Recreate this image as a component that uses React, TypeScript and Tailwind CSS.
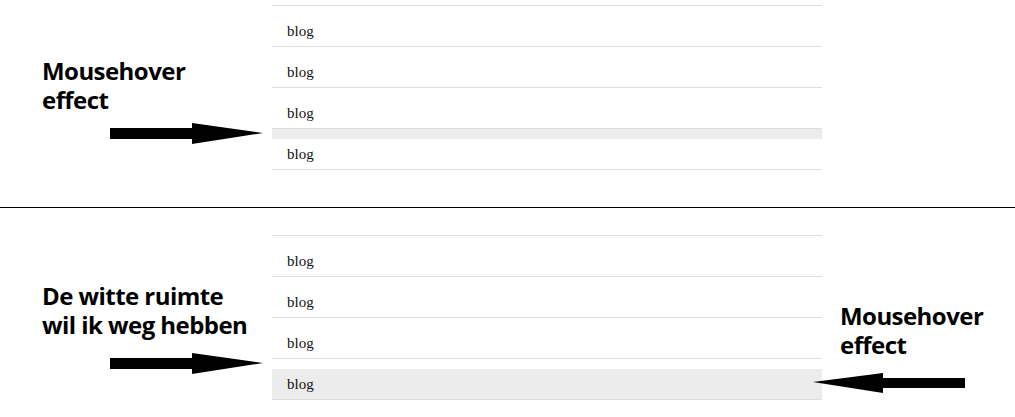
const label = "font-['Open_Sans',sans-serif] font-bold text-[24px] leading-[29px] tracking-[-0.55px] text-black";

function ArrowRight() {
  return (
    <svg width="153" height="21" viewBox="0 0 153 21" className="block">
      <rect x="0" y="5" width="84" height="11" fill="#000" />
      <polygon points="82,0 153,10 82,21" fill="#000" />
    </svg>
  );
}

function ArrowLeft() {
  return (
    <svg width="152" height="20" viewBox="0 0 152 20" className="block">
      <polygon points="0,9 70,0 70,20" fill="#000" />
      <rect x="68" y="5" width="84" height="10" fill="#000" />
    </svg>
  );
}

// hover: which part of the 4th row is grey
function BlogList({ hover }: { hover: "gap" | "item" }) {
  return (
    <ul className="border-t border-[#dedede]">
      {[0, 1, 2, 3].map((i) => {
        const last = i === 3;
        return (
          <li key={i} className="border-b border-[#dedede]">
            <div className={`h-[10px] ${last && hover === "gap" ? "bg-[#ececec]" : ""}`} />
            <div
              className={`h-[30px] flex items-center pl-[15px] font-['Liberation_Serif',serif] text-[15px] text-[#111] ${
                last && hover === "item" ? "bg-[#ececec]" : ""
              }`}
            >
              blog
            </div>
          </li>
        );
      })}
    </ul>
  );
}

export default function App() {
  return (
    <div className="w-[1015px] h-[417px] bg-white overflow-hidden">
      {/* Top: hover colours the spacer */}
      <section className="h-[207px] grid grid-cols-[272px_550px_1fr]">
        <div className="pl-[42px] pt-[56px]">
          <p className={label}>
            Mousehover
            <br />
            effect
          </p>
          <div className="mt-[9px] ml-[68px]">
            <ArrowRight />
          </div>
        </div>
        <div className="pt-[5px]">
          <BlogList hover="gap" />
        </div>
        <div />
      </section>

      <div className="h-px bg-black" />

      {/* Bottom: hover colours the item */}
      <section className="h-[209px] grid grid-cols-[272px_550px_1fr]">
        <div className="pl-[42px] pt-[73px]">
          <p className={label}>
            De witte ruimte
            <br />
            wil ik weg hebben
          </p>
          <div className="mt-[14px] ml-[68px]">
            <ArrowRight />
          </div>
        </div>
        <div className="pt-[27px]">
          <BlogList hover="item" />
        </div>
        <div className="pt-[93px]">
          <p className={`${label} pl-[18px]`}>
            Mousehover
            <br />
            effect
          </p>
          <div className="mt-[14px] -ml-[9px] relative">
            <ArrowLeft />
          </div>
        </div>
      </section>
    </div>
  );
}
